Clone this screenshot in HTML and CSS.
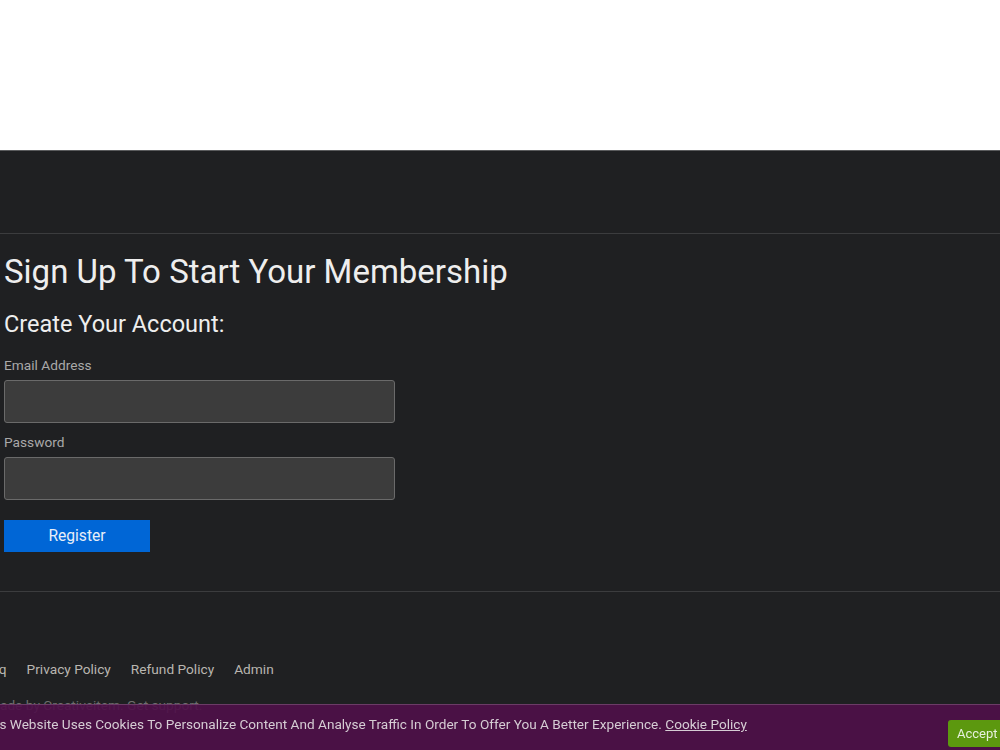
FILE: index.html
```html
<!DOCTYPE html>
<html lang="en">
<head>
    <meta charset="UTF-8">
    <meta name="viewport" content="width=device-width, initial-scale=1.0">
    <title>Sign Up</title>
    <link rel="stylesheet" href="styles.css">
</head>
<body>
<div class="banner"></div>

<div class="page">
    <header class="topbar"></header>

    <main class="signup">
        <h1>Sign Up To Start Your Membership</h1>
        <h2>Create Your Account:</h2>

        <form class="signup-form" onsubmit="return false;">
            <label for="email">Email Address</label>
            <input type="email" id="email" class="field">

            <label for="password">Password</label>
            <input type="password" id="password" class="field">

            <button type="submit" class="btn-register">Register</button>
        </form>
    </main>

    <footer class="footer">
        <nav class="footer-links">
            <a href="#">Faq</a>
            <a href="#">Privacy Policy</a>
            <a href="#">Refund Policy</a>
            <a href="#">Admin</a>
        </nav>
        <p class="copyright">Made by Creativeitem. Get support.</p>
    </footer>
</div>

<!-- cookie consent bar -->
<div class="cookie-bar">
    <p class="cookie-text">This Website Uses Cookies To Personalize Content And Analyse Traffic In Order To Offer You A Better Experience. <a href="#">Cookie Policy</a></p>
    <button class="btn-accept">Accept</button>
</div>
</body>
</html>
```

FILE: styles.css
```css
* {
    margin: 0;
    padding: 0;
    box-sizing: border-box;
    font-family: Roboto, 'Liberation Sans', sans-serif;
}

body {
    background-color: #ffffff;
    overflow: hidden;
}

.banner {
    height: 150px;
    background-color: #ffffff;
}

.page {
    background-color: #1f2022;
    border-top: 1px solid #5a5b5d;
    min-height: 600px;
}

.topbar {
    height: 83px;
    border-bottom: 1px solid #3b3c3e;
}

.signup {
    padding: 18px 4px 39px;
    border-bottom: 1px solid #3b3c3e;
}

h1 {
    font-size: 33px;
    font-weight: 400;
    color: #eeeeee;
    line-height: 40px;
    margin-bottom: 17px;
}

h2 {
    font-size: 23.5px;
    font-weight: 400;
    color: #eeeeee;
    line-height: 30px;
    margin-bottom: 17px;
}

.signup-form {
    display: flex;
    flex-direction: column;
    align-items: flex-start;
}

.signup-form label {
    font-size: 13.7px;
    color: #a9a9a9;
    line-height: 18px;
    margin-bottom: 6px;
}

.field {
    width: 391px;
    height: 43px;
    background-color: #3c3c3c;
    border: 1px solid #6a6a6a;
    border-radius: 3px;
    margin-bottom: 10px;
    color: #eeeeee;
    padding: 0 10px;
    font-size: 15px;
}

.btn-register {
    width: 146px;
    height: 32px;
    margin-top: 10px;
    background-color: #0066d6;
    color: #e8eef8;
    border: none;
    font-size: 15.6px;
    cursor: pointer;
}

.footer {
    padding-top: 67px;
}

.footer-links {
    display: flex;
    gap: 20px;
    margin-left: -16px;
}

.footer-links a {
    font-size: 13.7px;
    color: #b9b6b0;
    text-decoration: none;
    line-height: 20px;
}

.copyright {
    margin-top: 16px;
    margin-left: -12px;
    font-size: 13.7px;
    color: #6e6e6e;
    line-height: 20px;
}

.cookie-bar {
    position: fixed;
    left: 0;
    right: 0;
    bottom: 0;
    height: 46px;
    background-color: rgba(79, 16, 73, 0.9);
    border-top: 1px solid #6b3c66;
    display: flex;
    align-items: flex-start;
    justify-content: space-between;
}

.cookie-text {
    margin-left: -19.5px;
    margin-top: 11px;
    font-size: 13.6px;
    color: #d6cdd4;
    white-space: nowrap;
}

.cookie-text a {
    color: #d6cdd4;
}

.btn-accept {
    margin-top: 15px;
    width: 58px;
    height: 27px;
    margin-right: -6px;
    background-color: #5c980f;
    color: #e6f0dc;
    border: none;
    border-radius: 3px;
    font-size: 13px;
    text-align: left;
    padding-left: 9px;
}
```
